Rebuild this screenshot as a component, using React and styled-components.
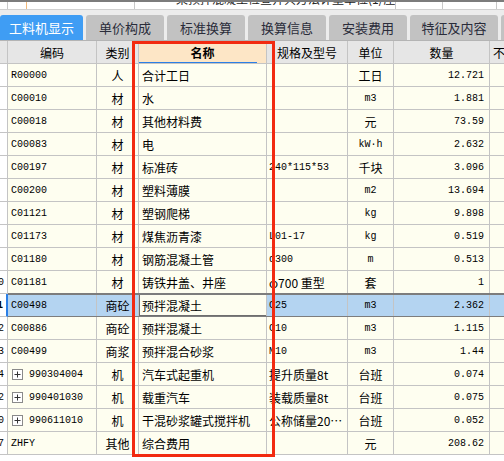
import React from 'react'
import styled, { createGlobalStyle } from 'styled-components'

const GlobalStyle = createGlobalStyle`
  html, body {
    margin: 0;
    padding: 0;
    background: #ffffff;
    font-family: "Noto Sans CJK SC", "Liberation Sans", sans-serif;
    font-size: 12px;
    color: #000;
  }
`

const COLS = '8px 89px 42px 128px 81px 46px 96px 60px'

const Page = styled.div`
  position: relative;
  width: 504px;
  height: 461px;
  overflow: hidden;
  background: #ffffff;
`

const TopStrip = styled.div`
  display: grid;
  grid-template-columns: 8px 19px 108px 261px 47px 54px 60px;
  height: 7px;
  border-top: 2px solid #7c7c7c;
  border-bottom: 1px solid #d0d0d0;
  background: #ffffff;
  overflow: hidden;
`

const TopCell = styled.div`
  border-right: 1px solid ${p => (p.$orange ? '#f2b97a' : '#c8c8c8')};
  overflow: hidden;
  padding-left: ${p => p.$indent || 0}px;
  white-space: nowrap;
  font-size: 12px;
  line-height: 14px;
`

const CutText = styled.div`
  margin-top: -10px;
  color: #222;
`

const TabBar = styled.div`
  display: flex;
  gap: 3px;
  padding-top: 5px;
  height: 25px;
  background: #ececec;
  border-bottom: 1px solid #b4b4b4;
  overflow: hidden;
`

const Tab = styled.div`
  flex: none;
  width: ${p => p.$w}px;
  height: 25px;
  border-radius: 3px 3px 0 0;
  background: ${p => (p.$active ? '#3f9df4' : '#c2c2c2')};
  color: ${p => (p.$active ? '#ffffff' : '#2a2c3a')};
  display: flex;
  align-items: center;
  justify-content: center;
  font-size: 13px;
  white-space: nowrap;
`

const Row = styled.div`
  position: relative;
  display: grid;
  grid-template-columns: ${COLS};
  height: 23px;

  ${p => p.$selected && `
    &::after {
      content: '';
      position: absolute;
      left: 8px;
      right: 0;
      top: -1px;
      bottom: -1px;
      border-top: 2px solid #7d7d7d;
      border-bottom: 2px solid #7d7d7d;
      pointer-events: none;
    }
  `}
`

const HeadCell = styled.div`
  position: relative;
  box-sizing: border-box;
  border-right: 1px solid #c4c4c4;
  border-bottom: 1px solid #c4c4c4;
  background: ${p => (p.$hl ? '#fde6c6' : '#e6e6e6')};
  display: flex;
  align-items: center;
  justify-content: ${p => (p.$left ? 'flex-start' : 'center')};
  padding-left: ${p => (p.$left ? 3 : 0)}px;
  font-weight: ${p => (p.$hl ? 700 : 400)};
  font-size: 12px;
  white-space: nowrap;
  overflow: hidden;

  ${p => p.$hl && `
    &::after {
      content: '';
      position: absolute;
      left: 0;
      width: 118px;
      bottom: -1px;
      height: 2px;
      background: #2b7fe6;
    }
  `}
`

const Cell = styled.div`
  box-sizing: border-box;
  border-right: 1px solid #c4c4c4;
  border-bottom: 1px solid #c4c4c4;
  background: ${p => (p.$sel ? '#b4d4f1' : '#fefef0')};
  display: flex;
  align-items: center;
  justify-content: ${p => p.$align || 'flex-start'};
  padding: 0 ${p => p.$pr ?? 3}px 0 ${p => p.$pl ?? 3}px;
  white-space: nowrap;
  overflow: hidden;
  font-family: ${p => (p.$mono ? '"Liberation Mono", "Noto Sans CJK SC", monospace' : '"Noto Sans CJK SC", "Liberation Sans", sans-serif')};
  font-size: ${p => (p.$mono ? '10px' : '12px')};
  color: #000;
`

const EditCell = styled(Cell)`
  background: #fefef0;
  box-shadow: inset 1px 0 0 #6e6e6e, inset 0 1px 0 #6e6e6e, inset 0 -1px 0 #6e6e6e;
`

const NumCell = styled.div`
  box-sizing: border-box;
  border-bottom: 1px solid #c4c4c4;
  border-right: ${p => (p.$sel ? '2px solid #2b7fe6' : '1px solid #c4c4c4')};
  background: #ffffff;
  display: flex;
  align-items: center;
  justify-content: flex-end;
  padding-right: 3px;
  overflow: hidden;
  font-family: "Liberation Mono", monospace;
  font-size: 10px;
  font-weight: ${p => (p.$sel ? 700 : 400)};
`

const PlusBox = styled.span`
  flex: none;
  width: 9px;
  height: 9px;
  border: 1px solid #8a8a8a;
  margin: 0 6px 0 1px;
  display: inline-flex;
  align-items: center;
  justify-content: center;
  background: #fff;
`

const Frame = styled.div`
  position: absolute;
  left: 132px;
  top: 41px;
  width: 143px;
  height: 416px;
  box-sizing: border-box;
  border: 3px solid #f22a10;
  pointer-events: none;
`

const tabs = [
  ['工料机显示', 83, true],
  ['单价构成', 78],
  ['标准换算', 78],
  ['换算信息', 78],
  ['安装费用', 78],
  ['特征及内容', 88],
  ['', 60],
]

const rows = [
  ['', 'R00000', '人', '合计工日', '', '工日', '12.721'],
  ['', 'C00010', '材', '水', '', 'm3', '1.881'],
  ['', 'C00018', '材', '其他材料费', '', '元', '73.59'],
  ['', 'C00083', '材', '电', '', 'kW·h', '2.632'],
  ['', 'C00197', '材', '标准砖', '240*115*53', '千块', '3.096'],
  ['', 'C00200', '材', '塑料薄膜', '', 'm2', '13.694'],
  ['', 'C01121', '材', '塑钢爬梯', '', 'kg', '9.898'],
  ['', 'C01173', '材', '煤焦沥青漆', 'L01-17', 'kg', '0.519'],
  ['', 'C01180', '材', '钢筋混凝土管', 'd300', 'm', '0.513'],
  ['10', 'C01181', '材', '铸铁井盖、井座', 'φ700 重型', '套', '1'],
  ['11', 'C00498', '商砼', '预拌混凝土', 'C25', 'm3', '2.362', true],
  ['12', 'C00886', '商砼', '预拌混凝土', 'C10', 'm3', '1.115'],
  ['13', 'C00499', '商浆', '预拌混合砂浆', 'M10', 'm3', '1.44'],
  ['14', '990304004', '机', '汽车式起重机', '提升质量8t', '台班', '0.074', false, true],
  ['12', '990401030', '机', '载重汽车', '装载质量8t', '台班', '0.075', false, true],
  ['10', '990611010', '机', '干混砂浆罐式搅拌机', '公称储量20…', '台班', '0.052', false, true],
  ['17', 'ZHFY', '其他', '综合费用', '', '元', '208.62'],
]

const isAscii = s => /^[\x20-\x7e·]*$/.test(s)

const Plus = () => (
  <PlusBox>
    <svg width="7" height="7" viewBox="0 0 7 7">
      <path d="M3.5 0.5v6M0.5 3.5h6" stroke="#333" strokeWidth="1" />
    </svg>
  </PlusBox>
)

const App = () => {
  return (
    <Page>
      <GlobalStyle />
      <TopStrip>
        <TopCell />
        <TopCell $orange />
        <TopCell />
        <TopCell $indent={41}>
          <CutText>某预拌混凝土检查井共方法计量单位(1/座)容</CutText>
        </TopCell>
        <TopCell />
        <TopCell />
        <TopCell />
      </TopStrip>

      <TabBar>
        {tabs.map(([label, w, active], i) => (
          <Tab key={i} $w={w} $active={active}>{label}</Tab>
        ))}
      </TabBar>

      <Row>
        <HeadCell />
        <HeadCell>编码</HeadCell>
        <HeadCell>类别</HeadCell>
        <HeadCell $hl>名称</HeadCell>
        <HeadCell>规格及型号</HeadCell>
        <HeadCell>单位</HeadCell>
        <HeadCell>数量</HeadCell>
        <HeadCell $left>不含税</HeadCell>
      </Row>

      {rows.map(([num, code, type, name, spec, unit, qty, sel, plus], i) => {
        const NameCell = sel ? EditCell : Cell
        return (
          <Row key={i} $selected={sel}>
            <NumCell $sel={sel}>{num}</NumCell>
            <Cell $sel={sel} $mono>
              {plus && <Plus />}
              {code}
            </Cell>
            <Cell $sel={sel} $align="center" $pl={0} $pr={0}>{type}</Cell>
            <NameCell $sel={sel}>{name}</NameCell>
            <Cell $sel={sel} $mono={isAscii(spec)} $pl={2}>{spec}</Cell>
            <Cell $sel={sel} $mono={isAscii(unit)} $align="center" $pl={0} $pr={0}>{unit}</Cell>
            <Cell $sel={sel} $mono $align="flex-end" $pr={5}>{qty}</Cell>
            <Cell $sel={sel} />
          </Row>
        )
      })}

      <Frame />
    </Page>
  )
}

export default App
